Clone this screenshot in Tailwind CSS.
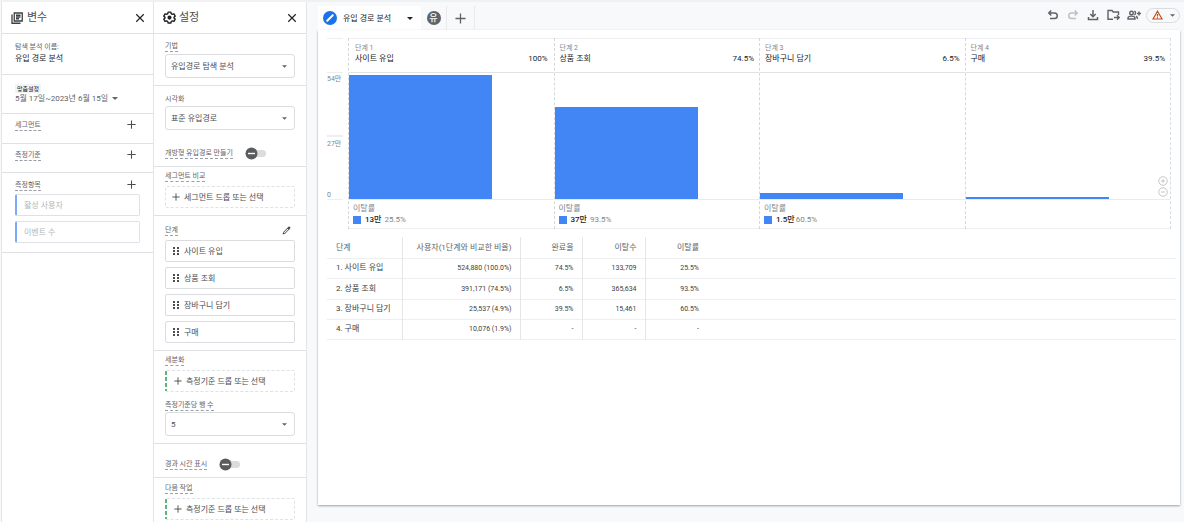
<!DOCTYPE html>
<html lang="ko">
<head>
<meta charset="utf-8">
<title>유입 경로 분석</title>
<script src="https://cdn.jsdelivr.net/npm/@tailwindcss/browser@4"></script>
</head>
<body class="flex min-h-screen border-t-2 border-[#eff1f3] bg-[#f8f9fa] font-[Roboto,'Noto_Sans_CJK_KR',sans-serif] text-[8px] leading-[11px] text-[#4a4d51]">
<svg class="hidden">
  <symbol id="close" viewBox="0 0 24 24"><path d="M3 3L21 21M21 3L3 21" stroke="currentColor" stroke-width="2.800" fill="none"/></symbol>
  <symbol id="plus" viewBox="0 0 24 24"><path d="M12 1V23M1 12H23" stroke="currentColor" stroke-width="2.800" fill="none"/></symbol>
  <symbol id="caret" viewBox="0 0 10 5"><path d="M0 0h10L5 5z" fill="currentColor"/></symbol>
  <symbol id="pencil" viewBox="0 0 24 24"><path fill="currentColor" d="M20.4 2.1c-.9-.9-2.300-.9-3.200 0L3.500 15.800 1.500 22.500l6.700-2L21.900 6.800c.9-.9.9-2.300 0-3.200zM5 17.300L15 7.300l1.700 1.700L6.700 19z"/></symbol>
  <symbol id="grip" viewBox="0 0 6 8"><path fill="currentColor" d="M0 0h2v2H0zM4 0h2v2H4zM0 3h2v2H0zM4 3h2v2H4zM0 6h2v2H0zM4 6h2v2H4z"/></symbol>
  <symbol id="switch" viewBox="0 0 21 13"><rect x="5" y="3" width="16" height="7" rx="3.500" fill="#dcdcdc"/><circle cx="6.500" cy="6.500" r="6" fill="#5a5b5d"/><path d="M3 6.500h7" stroke="#fff" stroke-width="1.400"/></symbol>
</svg>

<aside class="ml-px flex w-[153px] shrink-0 flex-col border-x border-[#e3e5e8] bg-white" aria-label="변수">
  <header class="flex h-8 items-center border-b border-[#dfe1e5] pr-2 pl-[9px]">
    <svg class="size-3" viewBox="0 0 24 24" fill="none" stroke="#3c4043" stroke-width="2.600"><path d="M6.500 2h16v16h-16zM2 5v17.500h17M10 6.500h9M10 10h9M10 13.500h6"/></svg>
    <h2 class="ml-1 text-[11px] leading-4">변수</h2>
    <button class="ml-auto text-[#202124]" aria-label="변수 닫기"><svg class="size-[10px]"><use href="#close"/></svg></button>
  </header>
  <section class="border-b border-[#dfe1e5] px-[13px] pt-2 pb-2.5">
    <p class="text-[7px] text-[#5f6368]">탐색 분석 이름:</p>
    <p class="text-[8px] text-[#202124]">유입 경로 분석</p>
  </section>
  <section class="border-b border-[#dfe1e5] px-[13px] pt-[9px] pb-[9px]">
    <span class="block w-fit bg-[#f1f3f4] px-0.5 text-[6px] leading-[9px] text-[#202124]">맞춤설정</span>
    <button class="flex items-center gap-1 whitespace-nowrap text-[#5f6368]">5월 17일~2023년 6월 15일<svg class="h-[3px] w-1.5"><use href="#caret"/></svg></button>
  </section>
  <section class="flex h-[30px] items-start justify-between border-b border-[#dfe1e5] pt-[6px] pr-[17px] pl-[13px]">
    <h3 class="border-b border-dashed border-[#9aa0a6] text-[7px] leading-[10px] text-[#5f6368]">세그먼트</h3>
    <button aria-label="세그먼트 추가"><svg class="size-[9px]"><use href="#plus"/></svg></button>
  </section>
  <section class="flex h-[29px] items-start justify-between border-b border-[#dfe1e5] pt-[6px] pr-[17px] pl-[13px]">
    <h3 class="border-b border-dashed border-[#9aa0a6] text-[7px] leading-[10px] text-[#5f6368]">측정기준</h3>
    <button aria-label="측정기준 추가"><svg class="size-[9px]"><use href="#plus"/></svg></button>
  </section>
  <section class="border-b border-[#dfe1e5] px-[13px] pt-[7px] pb-[9px]">
    <div class="flex items-start justify-between pr-1">
      <h3 class="border-b border-dashed border-[#9aa0a6] text-[7px] leading-[10px] text-[#5f6368]">측정항목</h3>
      <button aria-label="측정항목 추가"><svg class="size-[9px]"><use href="#plus"/></svg></button>
    </div>
    <div class="mt-[3px] flex flex-col gap-[5px] text-[#b4b6b9]">
      <button class="h-[22px] rounded-xs border border-l-2 border-[#dfe1e5] border-l-[#7baaf7] pl-[7px] text-left">활성 사용자</button>
      <button class="h-[22px] rounded-xs border border-l-2 border-[#dfe1e5] border-l-[#7baaf7] pl-[7px] text-left">이벤트 수</button>
    </div>
  </section>
</aside>

<aside class="flex w-[153px] shrink-0 flex-col border-r border-[#e3e5e8] bg-white" aria-label="탭 설정">
  <header class="flex h-8 items-center border-b border-[#dfe1e5] pr-[9px] pl-[9px]">
    <svg class="size-[13px]" viewBox="0 0 24 24" fill="none" stroke="#202124" stroke-width="2.600"><path stroke-linejoin="round" d="M9.500 2h5l.7 3 2 1.200 3-1 2.300 4.300-2.200 2v1.500l2.200 2-2.300 4.300-3-1-2 1.200-.7 2.700h-5l-.7-2.700-2-1.200-3 1L1.500 15l2.200-2v-1.500l-2.200-2L3.800 5.200l3 1L8.800 5z"/><circle cx="12" cy="12.200" r="2.500" fill="#202124"/></svg>
    <h2 class="ml-[3px] text-[11px] leading-4">설정</h2>
    <button class="ml-auto text-[#202124]" aria-label="설정 닫기"><svg class="size-[10px]"><use href="#close"/></svg></button>
  </header>

  <section class="border-b border-[#dfe1e5] px-[11px] pt-[7px] pb-[7px]">
    <label for="technique" class="block w-fit border-b border-dashed border-[#9aa0a6] text-[7px] leading-[10px] text-[#5f6368]">기법</label>
    <div class="relative mt-0.5">
      <select id="technique" class="block h-6 w-full appearance-none rounded-[3px] border border-[#dadce0] bg-white px-[5px] text-[8px]"><option>유입경로 탐색 분석</option></select>
      <svg class="pointer-events-none absolute top-[11px] right-2 h-[3px] w-[5px] text-[#5f6368]"><use href="#caret"/></svg>
    </div>
  </section>

  <section class="border-b border-[#dfe1e5] px-[11px] pt-2 pb-[6px]">
    <label for="visual" class="block w-fit text-[7px] leading-[10px] text-[#5f6368]">시각화</label>
    <div class="relative mt-0.5">
      <select id="visual" class="block h-6 w-full appearance-none rounded-[3px] border border-[#dadce0] bg-white px-[5px] text-[8px]"><option>표준 유입경로</option></select>
      <svg class="pointer-events-none absolute top-[11px] right-2 h-[3px] w-[5px] text-[#5f6368]"><use href="#caret"/></svg>
    </div>
    <label class="relative mt-[17px] flex w-fit items-center gap-3">
      <span class="border-b border-dashed border-[#9aa0a6] text-[7px] leading-[10px] text-[#5f6368]">개방형 유입경로 만들기</span>
      <input type="checkbox" role="switch" class="absolute right-0 h-[13px] w-[21px] opacity-0">
      <svg class="h-[13px] w-[21px]"><use href="#switch"/></svg>
    </label>
  </section>

  <section class="border-b border-[#dfe1e5] px-[11px] pt-1 pb-[7px]">
    <h3 class="w-fit border-b border-dashed border-[#9aa0a6] text-[7px] leading-[10px] text-[#5f6368]">세그먼트 비교</h3>
    <button class="mt-1 flex h-[22px] w-full items-center gap-1 rounded-xs border border-dashed border-[#dfe1e4] pl-1.5 text-[8px]"><svg class="size-2"><use href="#plus"/></svg>세그먼트 드롭 또는 선택</button>
  </section>

  <section class="border-b border-[#dfe1e5] px-[11px] pt-2 pb-[7px]">
    <div class="flex h-[13px] items-center justify-between pr-1">
      <h3 class="border-b border-dashed border-[#9aa0a6] text-[7px] leading-[10px] text-[#5f6368]">단계</h3>
      <button aria-label="단계 수정"><svg class="size-[9px]"><use href="#pencil"/></svg></button>
    </div>
    <div class="mt-[3px] flex flex-col gap-[5px] text-[8px]">
      <button class="flex h-[22px] items-center gap-[5px] rounded-xs border border-[#dadce0] pl-[7px]"><svg class="h-2 w-1.5"><use href="#grip"/></svg>사이트 유입</button>
      <button class="flex h-[22px] items-center gap-[5px] rounded-xs border border-[#dadce0] pl-[7px]"><svg class="h-2 w-1.5"><use href="#grip"/></svg>상품 조회</button>
      <button class="flex h-[22px] items-center gap-[5px] rounded-xs border border-[#dadce0] pl-[7px]"><svg class="h-2 w-1.5"><use href="#grip"/></svg>장바구니 담기</button>
      <button class="flex h-[22px] items-center gap-[5px] rounded-xs border border-[#dadce0] pl-[7px]"><svg class="h-2 w-1.5"><use href="#grip"/></svg>구매</button>
    </div>
  </section>

  <section class="border-b border-[#dfe1e5] px-[11px] pt-1 pb-[7px]">
    <h3 class="w-fit border-b border-dashed border-[#9aa0a6] text-[7px] leading-[10px] text-[#5f6368]">세분화</h3>
    <button class="mt-1 flex h-[22px] w-full items-center gap-1 rounded-xs border border-l-0 border-dashed border-[#dfe1e4] text-[8px]"><i class="mr-[3px] w-0.5 self-stretch bg-[repeating-linear-gradient(#5bb974_0_4px,transparent_4px_6px)]"></i><svg class="size-2"><use href="#plus"/></svg>측정기준 드롭 또는 선택</button>
    <label for="rows" class="mt-2 block w-fit border-b border-dashed border-[#9aa0a6] text-[7px] leading-[10px] text-[#5f6368]">측정기준당 행 수</label>
    <div class="relative mt-px">
      <select id="rows" class="block h-6 w-full appearance-none rounded-[3px] border border-[#dadce0] bg-white px-[5px] text-[8px]"><option>5</option></select>
      <svg class="pointer-events-none absolute top-[11px] right-2 h-[3px] w-[5px] text-[#5f6368]"><use href="#caret"/></svg>
    </div>
  </section>

  <section class="border-b border-[#dfe1e5] px-[11px] pt-3.5 pb-[6px]">
    <label class="relative flex w-fit items-center gap-3">
      <span class="border-b border-dashed border-[#9aa0a6] text-[7px] leading-[10px] text-[#5f6368]">경과 시간 표시</span>
      <input type="checkbox" role="switch" class="absolute right-0 h-[13px] w-[21px] opacity-0">
      <svg class="h-[13px] w-[21px]"><use href="#switch"/></svg>
    </label>
  </section>

  <section class="px-[11px] pt-[5px]">
    <h3 class="w-fit border-b border-dashed border-[#9aa0a6] text-[7px] leading-[10px] text-[#5f6368]">다음 작업</h3>
    <button class="mt-1 flex h-[22px] w-full items-center gap-1 rounded-xs border border-l-0 border-dashed border-[#dfe1e4] text-[8px]"><i class="mr-[3px] w-0.5 self-stretch bg-[repeating-linear-gradient(#5bb974_0_4px,transparent_4px_6px)]"></i><svg class="size-2"><use href="#plus"/></svg>측정기준 드롭 또는 선택</button>
  </section>
</aside>

<main class="flex min-w-0 flex-1 flex-col pt-1 pr-1 pb-[17px] pl-[11px]">
  <header class="flex h-6 shrink-0 items-stretch">
    <nav class="flex" aria-label="탭">
      <button class="flex w-[103px] items-center rounded-t-xs bg-white pl-[5px]">
        <svg class="size-[14px]" viewBox="0 0 28 28"><circle cx="14" cy="14" r="14" fill="#1a73e8"/><path d="M8.500 19.500L16 12" stroke="#fff" stroke-width="4" stroke-linecap="round"/><path d="M17.500 10.500l2-2" stroke="#fff" stroke-width="4" stroke-linecap="round"/></svg>
        <span class="ml-1.5 text-[8px] text-[#202124]">유입 경로 분석</span>
        <svg class="mr-2 ml-auto h-[3px] w-1.5 text-[#202124]"><use href="#caret"/></svg>
      </button>
      <button class="flex w-[26px] items-center justify-center border-r border-[#e8eaed]"><span class="size-[14px] rounded-full bg-[#5f6368] text-[9px] leading-[14px] font-medium text-white">유</span></button>
      <button class="flex w-[28px] items-center justify-center rounded-b-xs border-r border-[#e8eaed] text-[#5f6368]" aria-label="탭 추가"><svg class="size-[11px]"><use href="#plus"/></svg></button>
    </nav>
    <div class="ml-auto flex h-[18px] items-center gap-2 text-[#5f6368]">
      <button aria-label="실행취소"><svg class="size-3" viewBox="0 0 24 24" fill="none" stroke="currentColor" stroke-width="3"><path d="M8.500 3L3.500 8l5 5M4 8h11a5.500 5.500 0 0 1 0 11H6"/></svg></button>
      <button class="text-[#bdc1c6]" aria-label="다시 실행"><svg class="size-3" viewBox="0 0 24 24" fill="none" stroke="currentColor" stroke-width="3"><path d="M15.500 3l5 5-5 5M20 8H9a5.500 5.500 0 0 0 0 11h9"/></svg></button>
      <button aria-label="다운로드"><svg class="size-3" viewBox="0 0 24 24" fill="none" stroke="currentColor" stroke-width="3"><path d="M12 2v13M6.500 10l5.500 5.500 5.500-5.500M3 16v5h18v-5"/></svg></button>
      <button aria-label="내보내기"><svg class="h-3 w-[13px]" viewBox="0 0 26 24" fill="none" stroke="currentColor" stroke-width="2.800"><path d="M12 20.500H2V3h8l2.500 3H23v6M14 17h10M20 12.500l4.500 4.500-4.500 4.500"/></svg></button>
      <button class="-ml-px" aria-label="공유"><svg class="h-3 w-3.5" viewBox="0 0 28 24" fill="none" stroke="currentColor" stroke-width="2.800"><circle cx="9" cy="8" r="3.600"/><path d="M2 20v-2c0-5 14-5 14 0v2zM14.500 4.500a3.600 3.600 0 0 1 0 7M18 14.500c2.500 1 3 2.500 3 5.500M24 5v8M20 9h8"/></svg></button>
      <button class="-ml-[3px] flex h-[15px] w-[34px] items-center justify-center gap-[7px] rounded-full border border-[#dadce0]" aria-label="데이터 품질 경고"><svg class="h-2.5 w-[11px]" viewBox="0 0 22 20" fill="none" stroke="#c5501c" stroke-width="2.400"><path d="M11 2.500L20 18H2zM11 8v5M11 14.500v2"/></svg><svg class="h-[3px] w-[5px]"><use href="#caret"/></svg></button>
    </div>
  </header>

  <div class="flex-1 bg-white pt-2 shadow-[0_1px_2px_#9aa0a6]">
    <section class="mr-[9px] ml-[9px] flex" aria-label="유입경로 차트">
      <div class="flex w-[21px] shrink-0 flex-col text-[7px] leading-2 text-[#80868b]">
        <div class="mr-[5px] h-[35px] border-y border-[#eceef0]"></div>
        <div class="mr-[5px] flex h-[127px] flex-col border-b border-[#eceef0] pt-0.5">
          <span>54만</span><span class="mt-[52px] border-t-2 border-[#eceef0] pt-[3px]">27만</span><span class="mt-auto">0</span>
        </div>
      </div>
      <ol class="relative grid flex-1 grid-cols-4 border-r border-dashed border-[#dadce0]">
        <li class="flex flex-col border-l border-dashed border-[#d5d7da]">
          <div class="h-[35px] border-y border-t-[#eceef0] border-b-[#e0e2e4] px-[6px] pt-1 text-[#202124]"><p class="text-[7px] leading-[10px] text-[#80868b]">단계 1</p><p class="flex justify-between text-[8px]"><span>사이트 유입</span><span>100%</span></p></div>
          <div class="flex h-[127px] items-end border-b border-[#e8eaed]"><div class="w-[70%] bg-[#4285f4]" style="height:98.4%"></div></div>
          <div class="h-[29px] border-b border-[#eceef0] pt-1 pl-1"><p class="leading-[10px] text-[#80868b]">이탈률</p><p class="flex items-center gap-[3px]"><i class="mr-px size-2 bg-[#4285f4]"></i><b class="font-medium text-[#202124]">13만</b><span class="text-[#80868b]">25.5%</span></p></div>
        </li>
        <li class="flex flex-col border-l border-dashed border-[#d5d7da]">
          <div class="h-[35px] border-y border-t-[#eceef0] border-b-[#e0e2e4] px-[5px] pt-1 text-[#202124]"><p class="text-[7px] leading-[10px] text-[#80868b]">단계 2</p><p class="flex justify-between text-[8px]"><span>상품 조회</span><span>74.5%</span></p></div>
          <div class="flex h-[127px] items-end border-b border-[#e8eaed]"><div class="w-[70%] bg-[#4285f4]" style="height:73.3%"></div></div>
          <div class="h-[29px] border-b border-[#eceef0] pt-1 pl-1"><p class="leading-[10px] text-[#80868b]">이탈률</p><p class="flex items-center gap-[3px]"><i class="mr-px size-2 bg-[#4285f4]"></i><b class="font-medium text-[#202124]">37만</b><span class="text-[#80868b]">93.5%</span></p></div>
        </li>
        <li class="flex flex-col border-l border-dashed border-[#d5d7da]">
          <div class="h-[35px] border-y border-t-[#eceef0] border-b-[#e0e2e4] px-[5px] pt-1 text-[#202124]"><p class="text-[7px] leading-[10px] text-[#80868b]">단계 3</p><p class="flex justify-between text-[8px]"><span>장바구니 담기</span><span>6.5%</span></p></div>
          <div class="flex h-[127px] items-end border-b border-[#e8eaed]"><div class="w-[70%] bg-[#4285f4]" style="height:4.8%"></div></div>
          <div class="h-[29px] border-b border-[#eceef0] pt-1 pl-1"><p class="leading-[10px] text-[#80868b]">이탈률</p><p class="flex items-center gap-px"><i class="mr-[3px] size-2 bg-[#4285f4]"></i><b class="font-medium text-[#202124]">1.5만</b><span class="text-[#80868b]">60.5%</span></p></div>
        </li>
        <li class="flex flex-col border-l border-dashed border-[#d5d7da]">
          <div class="h-[35px] border-y border-t-[#eceef0] border-b-[#e0e2e4] px-[5px] pt-1 text-[#202124]"><p class="text-[7px] leading-[10px] text-[#80868b]">단계 4</p><p class="flex justify-between text-[8px]"><span>구매</span><span>39.5%</span></p></div>
          <div class="flex h-[127px] items-end border-b border-[#e8eaed]"><div class="w-[70%] bg-[#4285f4]" style="height:1.9%"></div></div>
          <div class="h-[29px] border-b border-[#eceef0]"></div>
        </li>
        <li class="absolute right-0.5 bottom-8 flex flex-col gap-px text-[#c4c6c9]">
          <button aria-label="확대"><svg class="size-2.5" viewBox="0 0 20 20" fill="none" stroke="currentColor" stroke-width="2"><circle cx="10" cy="10" r="8.500"/><path d="M10 6v8M6 10h8"/></svg></button>
          <button aria-label="축소"><svg class="size-2.5" viewBox="0 0 20 20" fill="none" stroke="currentColor" stroke-width="2"><circle cx="10" cy="10" r="8.500"/><path d="M6 10h8"/></svg></button>
        </li>
      </ol>
    </section>

    <div class="mt-2 mr-1 ml-[9px]">
      <table class="w-full table-fixed border-collapse text-right text-[7px] leading-[10px] text-[#3c4043] [&_td]:border-r [&_td]:border-[#e4e6e8] [&_td]:pr-2 [&_td:last-child]:border-r-0 [&_td:nth-last-child(2)]:border-r-0 [&_th]:border-r [&_th]:border-[#e4e6e8] [&_th]:font-normal [&_th:nth-last-child(2)]:border-r-0 [&_tr]:border-b [&_tr]:border-[#eceef0]">
        <colgroup><col class="w-[75px]"><col class="w-[118px]"><col class="w-[62px]"><col class="w-[63px]"><col class="w-[62px]"><col></colgroup>
        <thead class="text-[8px] text-[#5f6368]">
          <tr class="h-[21px]"><th scope="col" class="pt-0.5 pl-[9px] text-left">단계</th><th scope="col" class="pt-0.5 pr-2">사용자(1단계와 비교한 비율)</th><th scope="col" class="pt-0.5 pr-2">완료율</th><th scope="col" class="pt-0.5 pr-2">이탈수</th><th scope="col" class="pt-0.5 pr-2">이탈률</th><td></td></tr>
        </thead>
        <tbody>
          <tr class="h-5"><th scope="row" class="pl-[9px] text-left text-[8px]">1. 사이트 유입</th><td>524,880 (100.0%)</td><td>74.5%</td><td>133,709</td><td>25.5%</td><td></td></tr>
          <tr class="h-[21px]"><th scope="row" class="pl-[9px] text-left text-[8px]">2. 상품 조회</th><td>391,171 (74.5%)</td><td>6.5%</td><td>365,634</td><td>93.5%</td><td></td></tr>
          <tr class="h-5"><th scope="row" class="pl-[9px] text-left text-[8px]">3. 장바구니 담기</th><td>25,537 (4.9%)</td><td>39.5%</td><td>15,461</td><td>60.5%</td><td></td></tr>
          <tr class="h-5"><th scope="row" class="pl-[9px] text-left text-[8px]">4. 구매</th><td>10,076 (1.9%)</td><td>-</td><td>-</td><td>-</td><td></td></tr>
        </tbody>
      </table>
    </div>
  </div>
</main>
</body>
</html>
